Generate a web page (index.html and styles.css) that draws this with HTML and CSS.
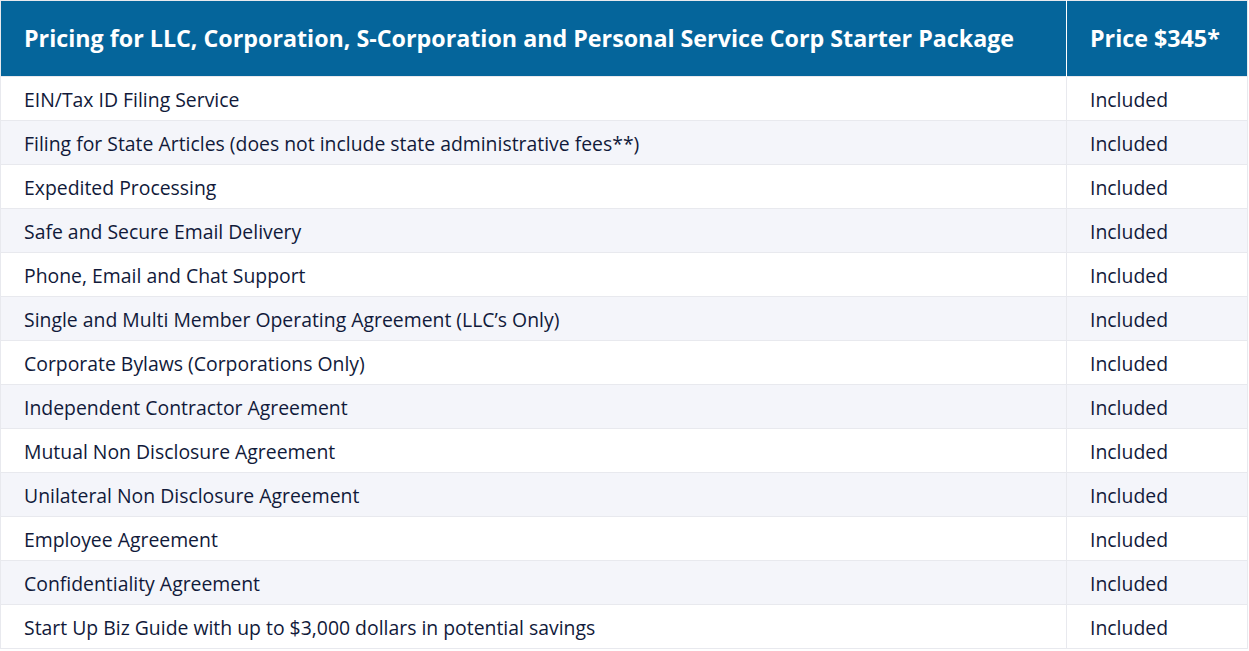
FILE: index.html
```html
<!DOCTYPE html>
<html>
<head>
<meta charset="utf-8">
<link rel="stylesheet" href="styles.css">
</head>
<body>
<table class="pricing">
  <thead>
    <tr>
      <th class="col-feature">Pricing for LLC, Corporation, S-Corporation and Personal Service Corp Starter Package</th>
      <th class="col-price">Price $345*</th>
    </tr>
  </thead>
  <tbody>
    <tr><td>EIN/Tax ID Filing Service</td><td>Included</td></tr>
    <tr><td>Filing for State Articles (does not include state administrative fees**)</td><td>Included</td></tr>
    <tr><td>Expedited Processing</td><td>Included</td></tr>
    <tr><td>Safe and Secure Email Delivery</td><td>Included</td></tr>
    <tr><td>Phone, Email and Chat Support</td><td>Included</td></tr>
    <tr><td>Single and Multi Member Operating Agreement (LLC’s Only)</td><td>Included</td></tr>
    <tr><td>Corporate Bylaws (Corporations Only)</td><td>Included</td></tr>
    <tr><td>Independent Contractor Agreement</td><td>Included</td></tr>
    <tr><td>Mutual Non Disclosure Agreement</td><td>Included</td></tr>
    <tr><td>Unilateral Non Disclosure Agreement</td><td>Included</td></tr>
    <tr><td>Employee Agreement</td><td>Included</td></tr>
    <tr><td>Confidentiality Agreement</td><td>Included</td></tr>
    <tr><td>Start Up Biz Guide with up to $3,000 dollars in potential savings</td><td>Included</td></tr>
  </tbody>
</table>
</body>
</html>
```
FILE: styles.css
```css
html, body {
  margin: 0;
  padding: 0;
  background: #ffffff;
}
body {
  font-family: "Open Sans", "Noto Sans", sans-serif;
  color: #111a3a;
}
.pricing {
  width: 1248px;
  border-collapse: collapse;
  border: 1px solid #e8e9ee;
}
.pricing th {
  background: #05659b;
  color: #ffffff;
  font-weight: 700;
  font-size: 23.25px;
  text-align: left;
  height: 76px;
  padding: 0 23px 1px;
  box-sizing: border-box;
  border-left: 1px solid #ffffff;
}
.pricing th:first-child {
  border-left: none;
}
.pricing .col-price {
  width: 181px;
}
.pricing td {
  font-size: 19.4px;
  height: 44px;
  padding: 2px 23px 0;
  box-sizing: border-box;
  border: 1px solid #e8e9ee;
}
.pricing tbody tr:nth-child(even) td {
  background: #f4f5fa;
}
```
